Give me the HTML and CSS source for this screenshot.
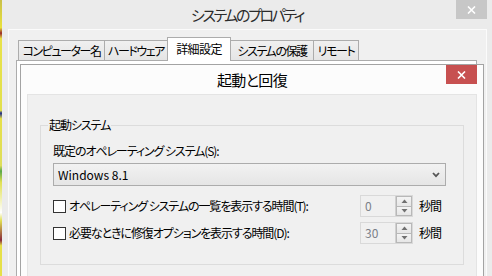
FILE: index.html
```html
<!DOCTYPE html>
<html lang="ja">
<head>
<meta charset="utf-8">
<link rel="stylesheet" href="styles.css">
</head>
<body>
<div class="screen">
  <div class="wallpaper"></div>
  <div class="window">
    <div class="titlebar">
      <span></span>
      <div class="title">システムのプロパティ</div>
      <div class="close close-gray">
        <svg width="9" height="8" viewBox="0 0 9 8"><path d="M1 0.5 L8 7.5 M8 0.5 L1 7.5" stroke="#fff" stroke-width="1.6" fill="none"/></svg>
      </div>
    </div>
    <div class="client">
      <div class="tabs">
        <div class="tab t1">コンピューター名</div>
        <div class="tab t2">ハードウェア</div>
        <div class="tab t3 selected">詳細設定</div>
        <div class="tab t4">システムの保護</div>
        <div class="tab t5">リモート</div>
      </div>
      <div class="panel"></div>
    </div>
  </div>

  <div class="dialog">
    <div class="dtitlebar">
      <span></span>
      <div class="dtitle">起動と回復</div>
      <div class="close close-red">
        <svg width="9" height="8" viewBox="0 0 9 8"><path d="M1 0.5 L8 7.5 M8 0.5 L1 7.5" stroke="#fff" stroke-width="1.6" fill="none"/></svg>
      </div>
    </div>
    <div class="dclient">
      <fieldset class="group">
        <legend>起動システム</legend>
        <div class="label">既定のオペレーティング システム(S):</div>
        <div class="combo">
          <span>Windows 8.1</span>
          <svg width="8" height="6" viewBox="0 0 8 6"><path d="M1 1 L4 4.2 L7 1" stroke="#555" stroke-width="1.8" fill="none"/></svg>
        </div>
        <div class="row">
          <div class="check"></div>
          <div class="rlabel">オペレーティング システムの一覧を表示する時間(T):</div>
          <div class="spin">
            <span class="num">0</span>
            <div class="btns">
              <div class="btn"><svg width="7" height="4" viewBox="0 0 7 4"><path d="M0.5 4 L3.5 0.5 L6.5 4 Z" fill="#707070"/></svg></div>
              <div class="btn"><svg width="7" height="4" viewBox="0 0 7 4"><path d="M0.5 0 L3.5 3.5 L6.5 0 Z" fill="#707070"/></svg></div>
            </div>
          </div>
          <div class="unit">秒間</div>
        </div>
        <div class="row">
          <div class="check"></div>
          <div class="rlabel">必要なときに修復オプションを表示する時間(D):</div>
          <div class="spin">
            <span class="num">30</span>
            <div class="btns">
              <div class="btn"><svg width="7" height="4" viewBox="0 0 7 4"><path d="M0.5 4 L3.5 0.5 L6.5 4 Z" fill="#707070"/></svg></div>
              <div class="btn"><svg width="7" height="4" viewBox="0 0 7 4"><path d="M0.5 0 L3.5 3.5 L6.5 0 Z" fill="#707070"/></svg></div>
            </div>
          </div>
          <div class="unit">秒間</div>
        </div>
      </fieldset>
    </div>
  </div>
</div>
</body>
</html>
```

FILE: styles.css
```css
* { box-sizing: border-box; }
html, body { margin: 0; padding: 0; }
body {
  width: 492px;
  height: 276px;
  overflow: hidden;
  background: #ebebeb;
  font-family: "Noto Sans CJK JP", "Noto Sans", sans-serif;
  font-feature-settings: "palt" 1;
  font-size: 12px;
  letter-spacing: -0.09em;
  color: #000;
}
.screen {
  position: relative;
  display: flex;
  width: 492px;
  height: 276px;
}
.wallpaper {
  width: 2px;
  flex: none;
  background: linear-gradient(180deg, #c9c04a 0%, #e9e23a 10%, #9a2a2a 12%, #e8e24a 14%, #e2e04c 40%, #1c2a8a 41%, #e6e04a 43%, #dede5a 60%, #5aa84a 62%, #e0e052 66%, #ffffff 77%, #e0de50 80%, #8a2a3a 87%, #e6e048 89%);
}
.window {
  flex: 1;
  display: flex;
  flex-direction: column;
  background: #ebebeb;
}
.titlebar {
  height: 29px;
  display: grid;
  grid-template-columns: 1fr auto 1fr;
  align-items: start;
  flex: none;
}
.title {
  font-size: 15px;
  line-height: 29px;
  letter-spacing: -0.16em;
  color: #2b2b2b;
}
.close {
  justify-self: end;
  width: 31px;
  height: 19px;
  display: flex;
  align-items: center;
  justify-content: center;
}
.close-gray {
  background: #c7c7c7;
  margin-right: 5px;
}
.client {
  flex: 1;
  margin: 0 5px 0 6px;
  background: #f0f0f0;
  border: 1px solid #fbfbfb;
  border-bottom: none;
  padding: 7px 9px 0 7px;
  display: flex;
  flex-direction: column;
}
.tabs {
  display: flex;
  align-items: flex-end;
  padding-left: 2px;
  height: 23px;
  flex: none;
}
.tab {
  height: 20px;
  border: 1px solid #acacac;
  border-bottom: none;
  background: linear-gradient(#f0f0f0, #e5e5e5);
  text-align: center;
  line-height: 19px;
  white-space: nowrap;
  letter-spacing: -0.12em;
}
.tab + .tab { margin-left: -1px; }
.t1 { width: 87px; }
.t2 { width: 64px; }
.t3 { width: 64px; }
.t4 { width: 84px; }
.t5 { width: 46px; }
.tab.selected {
  height: 24px;
  margin-bottom: -1px;
  background: #fff;
  position: relative;
  z-index: 1;
  line-height: 21px;
  letter-spacing: -0.05em;
}
.panel {
  flex: 1;
  background: #fff;
  border: 1px solid #acacac;
  border-bottom: none;
}

.dialog {
  position: absolute;
  left: 20px;
  top: 64px;
  width: 464px;
  height: 240px;
  background: #fcfcfc;
  border: 1px solid #a3a3a3;
  display: flex;
  flex-direction: column;
}
.dtitlebar {
  height: 29px;
  flex: none;
  display: grid;
  grid-template-columns: 1fr auto 1fr;
  align-items: start;
}
.dtitle {
  font-size: 15px;
  line-height: 29px;
  letter-spacing: -0.04em;
  color: #000;
}
.close-red {
  background: #c75050;
  margin-right: 6px;
}
.dclient {
  flex: 1;
  margin: 0 6px;
  background: #f0f0f0;
  border: 1px solid #e4e4e4;
  border-bottom: none;
  padding-top: 22px;
}
.group {
  margin: 0 12px;
  border: 1px solid #dcdcdc;
  padding: 10px 17px 20px 12px;
  min-width: 0;
}
.group legend {
  padding: 0 1px;
  margin-left: -5px;
  line-height: 16px;
}
.label {
  line-height: 16px;
}
.combo {
  margin-top: 4px;
  height: 23px;
  border: 1px solid #acacac;
  background: linear-gradient(#f2f2f2, #e5e5e5);
  display: flex;
  align-items: center;
  justify-content: space-between;
  padding: 0 5px 0 4px;
}
.combo span { line-height: 16px; letter-spacing: 0; }
.row {
  display: flex;
  align-items: center;
  height: 22px;
  margin-top: 9px;
}
.row + .row { margin-top: 5px; }
.check {
  width: 13px;
  height: 13px;
  border: 1px solid #333;
  background: #fff;
  flex: none;
}
.rlabel {
  flex: 1;
  margin-left: 3px;
  white-space: nowrap;
  line-height: 16px;
}
.spin {
  width: 53px;
  height: 22px;
  border: 1px solid #d9d9d9;
  background: #f0f0f0;
  display: flex;
  align-items: stretch;
  flex: none;
}
.num {
  flex: 1;
  padding-left: 4px;
  color: #7b8088;
  line-height: 20px;
  letter-spacing: 0;
}
.btns {
  width: 17px;
  display: flex;
  flex-direction: column;
  border-left: 1px solid #d0d0d0;
}
.btn {
  flex: 1;
  display: flex;
  align-items: center;
  justify-content: center;
  background: linear-gradient(#f4f4f4, #e6e6e6);
  border: 1px solid #b8b8b8;
}
.btn + .btn { border-top: none; }
.unit {
  width: 27px;
  margin-left: 6px;
  line-height: 16px;
  flex: none;
}
```
